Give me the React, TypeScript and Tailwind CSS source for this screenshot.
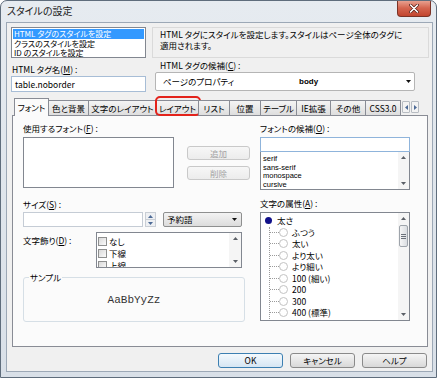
import React from "react";

type Dir = "up" | "down" | "left" | "right";
function Tri({ dir, color = "#5a5f66" }: { dir: Dir; color?: string }) {
  const vert = dir === "up" || dir === "down";
  const w = vert ? 5 : 3;
  const h = vert ? 3 : 5;
  const pts = {
    up: "0,3 2.5,0 5,3",
    down: "0,0 5,0 2.5,3",
    left: "3,0 3,5 0,2.5",
    right: "0,0 0,5 3,2.5",
  }[dir];
  return (
    <svg width={w} height={h} viewBox={`0 0 ${w} ${h}`}>
      <polygon points={pts} fill={color} />
    </svg>
  );
}

function VScroll({ thumb = false, w = "w-[11px]" }: { thumb?: boolean; w?: string }) {
  return (
    <div className={`${w} h-full flex flex-col bg-[#f5f5f5] shrink-0`}>
      <div className="h-[11px] flex items-center justify-center">
        <Tri dir="up" />
      </div>
      {thumb && (
        <div className="mt-px mx-px h-[22px] rounded-[2px] border border-[#9ea4ab] bg-gradient-to-r from-[#f6f6f6] to-[#dadde1] flex flex-col items-center justify-center gap-px">
          <div className="w-[5px] h-px bg-[#6a7079]" />
          <div className="w-[5px] h-px bg-[#6a7079]" />
          <div className="w-[5px] h-px bg-[#6a7079]" />
        </div>
      )}
      <div className="flex-1" />
      <div className="h-[11px] flex items-center justify-center">
        <Tri dir="down" />
      </div>
    </div>
  );
}

function Label({ text, k, className = "" }: { text: string; k: string; className?: string }) {
  return (
    <div className={`h-[10px] leading-[10px] whitespace-nowrap ${className}`}>
      {text}(<span className="underline">{k}</span>) :
    </div>
  );
}

const tabs: [string, number][] = [
  ["フォント", 35],
  ["色と背景", 41],
  ["文字のレイアウト", 69],
  ["レイアウト", 43],
  ["リスト", 32],
  ["位置", 32],
  ["テーブル", 37],
  ["IE拡張", 35],
  ["その他", 36],
  ["CSS3.0", 36],
];

const weights = ["ふつう", "太い", "より太い", "より細い", "100 (細い)", "200", "300", "400 (標準)"];

export default function App() {
  return (
    <div className="w-[437px] h-[378px] flex flex-col rounded-t-[7px] border border-[#5f6d7c] bg-gradient-to-b from-[#e6ebf0] to-[#d9e0e8] overflow-hidden text-black text-[8.5px] font-['Noto_Sans_CJK_JP',sans-serif] [font-feature-settings:'palt']">
      {/* title bar */}
      <div className="h-[21px] flex items-start shrink-0">
        <div className="pl-[6px] pt-[4px] text-[10px] leading-[12px] text-[#1c1c1c]">スタイルの設定</div>
        <div className="ml-auto mr-[5px] -mt-px w-[34px] h-[17px] rounded-b-[4px] border border-t-0 border-[#7b3326] bg-gradient-to-b from-[#eaa898] via-[#d4654f] to-[#c2452e] flex items-center justify-center">
          <svg width="10" height="9" viewBox="0 0 10 9">
            <path d="M1.5 1 L8.5 8 M8.5 1 L1.5 8" stroke="#5a1f16" strokeWidth="3" strokeLinecap="round" />
            <path d="M1.5 1 L8.5 8 M8.5 1 L1.5 8" stroke="#ffffff" strokeWidth="1.6" strokeLinecap="round" />
          </svg>
        </div>
      </div>

      {/* client */}
      <div className="ml-[5px] w-[427px] h-[350px] border border-[#9ca8b6] bg-[#f0f0f0] flex flex-col">
        {/* row 1 */}
        <div className="mt-[4px] ml-[4px] flex">
          <div className="w-[135px] h-[31px] border border-[#828790] bg-white p-px leading-[9.5px] text-[8px]">
            <div className="bg-[#3399ff] text-white pl-px">HTML タグのスタイルを設定</div>
            <div className="pl-px">クラスのスタイルを設定</div>
            <div className="pl-px">ID のスタイルを設定</div>
          </div>
          <div className="ml-[6px] w-[277px] h-[31px] border border-[#dadada] pl-[7px] pt-px leading-[11px]">
            <div>HTML タグにスタイルを設定します。スタイルはページ全体のタグに</div>
            <div>適用されます。</div>
          </div>
        </div>

        {/* row 2 */}
        <div className="ml-[4px] h-[34px] flex">
          <div className="w-[135px] flex flex-col">
            <Label text="HTML タグ名" k="M" className="mt-[6px] pl-px" />
            <div className="mt-[2px] h-[16px] border border-[#a7bdd6] bg-white pl-[3px] flex items-center">table.noborder</div>
          </div>
          <div className="ml-[9px] w-[260px] flex flex-col">
            <Label text="HTML タグの候補" k="C" className="mt-[2px] pl-[5px]" />
            <div className="mt-[2px] h-[19px] border border-[#b5b5b5] rounded-[2px] bg-white flex items-center pl-[7px] pr-[3px]">
              <span className="w-[136px]">ページのプロパティ</span>
              <span className="font-bold text-[8px] font-['Liberation_Sans',sans-serif]">body</span>
              <span className="ml-auto">
                <Tri dir="down" color="#111" />
              </span>
            </div>
          </div>
        </div>

        {/* tabs */}
        <div className="mt-[6px] ml-[7px] h-[17px] flex items-end">
          {tabs.map(([t, w], i) => {
            const sel = i === 0;
            return (
              <div
                key={t}
                style={{ width: w }}
                className={
                  sel
                    ? "relative z-10 h-[18px] -mb-px border border-b-0 border-[#898c95] bg-[#fbfbfb] flex items-center justify-center whitespace-nowrap"
                    : "relative -ml-px h-[15px] border border-b-0 border-[#898c95] bg-gradient-to-b from-[#f4f4f4] to-[#dedede] flex items-center justify-center whitespace-nowrap"
                }
              >
                {t}
                {i === 3 && (
                  <div className="absolute -left-[2px] -right-[3px] -top-[5px] -bottom-px border-2 border-[#e3231b] rounded-[5px]" />
                )}
              </div>
            );
          })}
          <div className="ml-px mb-[2px] flex gap-px">
            <div className="w-[8px] h-[12px] border border-[#b7bcc2] bg-[#f3f3f3] rounded-[1px] flex items-center justify-center">
              <Tri dir="left" color="#4d6a96" />
            </div>
            <div className="w-[8px] h-[12px] border border-[#b7bcc2] bg-[#f3f3f3] rounded-[1px] flex items-center justify-center">
              <Tri dir="right" color="#4d6a96" />
            </div>
          </div>
        </div>

        {/* panel */}
        <div className="ml-[5px] w-[416px] h-[232px] border border-[#898c95] bg-[#fbfbfb] flex">
          {/* left column */}
          <div className="ml-[10px] w-[227px] flex flex-col">
            <Label text="使用するフォント" k="F" className="mt-[7px]" />
            <div className="mt-[4px] flex">
              <div className="w-[151px] h-[51px] border border-[#828790] bg-white" />
              <div className="ml-[13px] pt-[9px] flex flex-col gap-[6px]">
                <div className="w-[63px] h-[14px] rounded-[3px] border border-[#c9c9c9] bg-gradient-to-b from-[#f7f7f7] to-[#ececec] text-[#a3a3a3] flex items-center justify-center">追加</div>
                <div className="w-[63px] h-[14px] rounded-[3px] border border-[#c9c9c9] bg-gradient-to-b from-[#f7f7f7] to-[#ececec] text-[#a3a3a3] flex items-center justify-center">削除</div>
              </div>
            </div>
            <Label text="サイズ" k="S" className="mt-[11px]" />
            <div className="mt-[3px] h-[15px] flex">
              <div className="w-[120px] h-full border border-[#c5ccd5] bg-white" />
              <div className="ml-[2px] w-[11px] h-full flex flex-col border border-[#c9ced5] bg-[#eef0f3]">
                <div className="flex-1 flex items-center justify-center border-b border-[#c9ced5]">
                  <Tri dir="up" color="#4d6a96" />
                </div>
                <div className="flex-1 flex items-center justify-center">
                  <Tri dir="down" color="#4d6a96" />
                </div>
              </div>
              <div className="ml-[7px] w-[79px] h-full rounded-[2px] border border-[#8e8f8f] bg-gradient-to-b from-[#f3f3f3] to-[#dcdcdc] flex items-center pl-[3px] pr-[4px]">
                <span>予約語</span>
                <span className="ml-auto">
                  <Tri dir="down" color="#111" />
                </span>
              </div>
            </div>
            <div className="mt-[5px] flex">
              <div className="w-[73px] pt-[3px]">
                <Label text="文字飾り" k="D" />
              </div>
              <div className="w-[146px] h-[36px] border border-[#828790] bg-white flex overflow-hidden">
                <div className="flex-1 pt-[2px] pl-px">
                  {["なし", "下線", "上線"].map((t) => (
                    <div key={t} className="h-[12px] flex items-center">
                      <span className="w-[9px] h-[9px] border border-[#8e8f8f] bg-gradient-to-br from-[#d9d9d9] to-[#fbfbfb]" />
                      <span className="ml-[2px] leading-[12px]">{t}</span>
                    </div>
                  ))}
                </div>
                <VScroll w="w-[12px]" />
              </div>
            </div>
            <div className="mt-[9px] relative w-[222px] h-[45px] border border-[#d6dfe6] rounded-[3px] flex items-center justify-center">
              <span className="absolute left-[5px] -top-[6px] bg-[#fbfbfb] px-px leading-[10px]">サンプル</span>
              <span className="font-['Liberation_Mono',monospace] text-[11px] text-[#333] mt-[2px]">AaBbYyZz</span>
            </div>
          </div>

          {/* right column */}
          <div className="ml-[10px] w-[150px] flex flex-col">
            <Label text="フォントの候補" k="O" className="mt-[7px]" />
            <div className="mt-[4px] h-[15px] border border-[#8fb4db] bg-white" />
            <div className="h-[38px] border border-t-0 border-[#828790] bg-white flex">
              <div className="flex-1 pt-[3px] pl-[2px] text-[7.5px] leading-[8.5px] font-['Liberation_Sans',sans-serif]">
                <div>serif</div>
                <div>sans-serif</div>
                <div>monospace</div>
                <div>cursive</div>
              </div>
              <VScroll />
            </div>
            <Label text="文字の属性" k="A" className="mt-[8px]" />
            <div className="mt-[4px] h-[109px] border border-[#828790] bg-white flex overflow-hidden">
              <div className="flex-1 pt-[2px] pl-[4px]">
                <div className="h-[11.5px] flex items-center">
                  <span className="w-[7px] h-[7px] rounded-full bg-[#11118a]" />
                  <span className="ml-[5px]">太さ</span>
                </div>
                <div className="ml-[4px] border-l border-dotted border-[#9a9a9a]">
                  {weights.map((t) => (
                    <div key={t} className="h-[11.5px] flex items-center">
                      <span className="w-[9px] border-t border-dotted border-[#9a9a9a]" />
                      <span className="w-[9px] h-[9px] rounded-full border border-[#c3c3c3] bg-white" />
                      <span className="ml-[4px] whitespace-nowrap">{t}</span>
                    </div>
                  ))}
                </div>
              </div>
              <VScroll thumb />
            </div>
          </div>
        </div>

        {/* buttons */}
        <div className="mt-[6px] pr-[5px] flex justify-end gap-[7px]">
          <div className="w-[65px] h-[15px] rounded-[3px] border border-[#3c7fb1] bg-gradient-to-b from-[#f4f9fd] to-[#d6e6f3] flex items-center justify-center">OK</div>
          <div className="w-[65px] h-[15px] rounded-[3px] border border-[#8a8a8a] bg-gradient-to-b from-[#f5f5f5] to-[#d8d8d8] flex items-center justify-center">キャンセル</div>
          <div className="w-[65px] h-[15px] rounded-[3px] border border-[#8a8a8a] bg-gradient-to-b from-[#f5f5f5] to-[#d8d8d8] flex items-center justify-center">ヘルプ</div>
        </div>
      </div>
    </div>
  );
}
